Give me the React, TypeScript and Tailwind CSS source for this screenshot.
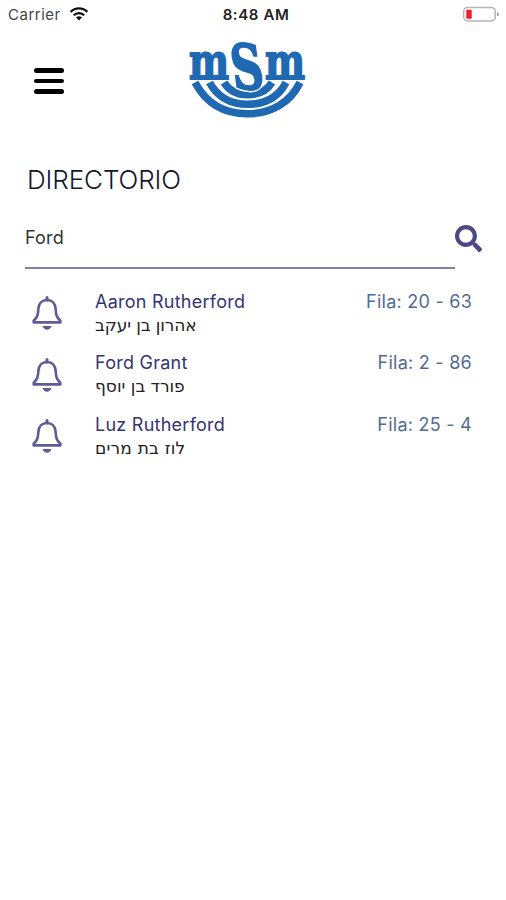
import { FaSearch } from "react-icons/fa";

const people = [
  { name: "Aaron Rutherford", hebrew: "אהרון בן יעקב", seat: "Fila: 20 - 63", hebrewSize: "text-[17px] tracking-[-0.1px]" },
  { name: "Ford Grant", hebrew: "פורד בן יוסף", seat: "Fila: 2 - 86", hebrewSize: "text-[17px]" },
  { name: "Luz Rutherford", hebrew: "לוז בת מרים", seat: "Fila: 25 - 4", hebrewSize: "text-[17px] tracking-[0.2px]" },
];

const WifiIcon: React.FC = () => (
  <svg width="20" height="14" viewBox="0 0 20 14" fill="none" stroke="#111" strokeWidth="2.3">
    <path d="M1.6 4.9C6.2 .3 13.8 .3 18.4 4.9" />
    <path d="M4.8 8.3C7.7 5.4 12.3 5.4 15.2 8.3" />
    <path d="M10 13.4L7 10.4Q10 8.2 13 10.4Z" fill="#111" stroke="none" />
  </svg>
);

const BatteryIcon: React.FC = () => (
  <svg width="38" height="17" viewBox="0 0 38 17" fill="none">
    <rect x="1.7" y="1.4" width="31.6" height="13.6" rx="4" stroke="#b5b5b5" strokeWidth="1.5" />
    <rect x="4.3" y="3.8" width="5.4" height="9" rx="0.8" fill="#f51b20" />
    <path d="M35 6.2Q37 6.7 37 8.2T35 10.2Z" fill="#999" />
  </svg>
);

const BellIcon: React.FC = () => (
  <svg width="30" height="34" viewBox="0 0 30 34" fill="none" stroke="#5d5c98">
    <path d="M15 1.5V4" strokeWidth="3" strokeLinecap="round" />
    <path
      d="M15 4C9.8 4 6.8 7.6 6.4 12.6C6 18.5 5.7 21 1.7 24.8V26.4H28.3V24.8C24.3 21 24 18.5 23.6 12.6C23.2 7.6 20.2 4 15 4Z"
      strokeWidth="2.6"
      strokeLinejoin="round"
    />
    <path d="M10.5 30H19.5Q18 33.8 15 33.8T10.5 30Z" fill="#5d5c98" stroke="none" />
  </svg>
);

const Logo: React.FC = () => (
  <svg width="122" height="80" viewBox="0 0 122 80" className="overflow-visible">
    {/* Menorah arms */}
    <g fill="none" stroke="#1f69b3" strokeWidth="7.6">
      <path d="M9 42.5C20 63 38 73.8 61.5 73.8S104 63 114 42.5" />
      <path d="M23.5 42.5C31 56 43 64.3 61.5 64.3S93 56 100 42.5" />
      <path d="M38 42.5C43 50.5 50 54.8 61.5 54.8S81 50.5 86 42.5" />
    </g>
    <g fill="#1f69b3" stroke="#1f69b3" fontFamily="DejaVu Serif, serif" fontWeight="700">
      <text x="3" y="39" fontSize="51" strokeWidth="2" textLength="40" lengthAdjust="spacingAndGlyphs">m</text>
      <text x="79" y="39" fontSize="51" strokeWidth="2" textLength="40" lengthAdjust="spacingAndGlyphs">m</text>
      <g transform="skewX(8)">
        <text x="41" y="49" fontSize="62" textLength="32" lengthAdjust="spacingAndGlyphs" stroke="#fff" strokeWidth="5">S</text>
        <text x="41" y="49" fontSize="62" textLength="32" lengthAdjust="spacingAndGlyphs" strokeWidth="2">S</text>
      </g>
    </g>
  </svg>
);

const App: React.FC = () => {
  return (
    <div className="h-[900px] w-[506px] bg-white font-['Inter',sans-serif]">
      {/* Status bar */}
      <div className="grid h-7 grid-cols-3 items-center pl-2 pr-1.5 text-[15px]">
        <div className="flex items-center gap-2 text-[#444]">
          <span className="pt-0.5 tracking-[0.5px]">Carrier</span>
          <WifiIcon />
        </div>
        <span className="pl-1 pt-0.5 text-center text-[15px] font-semibold tracking-[0.6px] text-[#222]">8:48 AM</span>
        <div className="flex justify-end">
          <BatteryIcon />
        </div>
      </div>

      {/* Header */}
      <header className="flex h-28 items-start pl-[34px] pt-3">
        <button className="mt-7 flex w-[30px] flex-col gap-1.5" aria-label="Menu">
          <span className="h-[4.6px] w-full rounded-sm bg-black" />
          <span className="h-[4.6px] w-full rounded-sm bg-black" />
          <span className="h-[4.6px] w-full rounded-sm bg-black" />
        </button>
        <div className="ml-[122px]">
          <Logo />
        </div>
      </header>

      <main>
        <h1 className="mt-5 pl-[27px] text-[26px] font-light leading-10 tracking-[-0.1px] text-[#14172b]">DIRECTORIO</h1>

        {/* Search field */}
        <div className="ml-[25px] mt-4 flex h-[53px]">
          <div className="w-[430px] border-b-2 border-[#827fa8] pt-2.5">
            <p className="text-[18px] leading-6 tracking-[0.2px] text-[#333]">Ford</p>
          </div>
          <FaSearch className="mt-[9px] size-[27px] text-[#4d4985]" />
        </div>

        {/* Results */}
        <ul className="pt-[20.5px]">
          {people.map((person) => (
            <li key={person.name} className="flex h-[61.5px] pl-8 pr-[34px]">
              <div className="pt-[6.5px]">
                <BellIcon />
              </div>
              <div className="ml-[33px] flex-1">
                <p className="text-[18px] leading-6 tracking-[0.25px] text-[#343470]">{person.name}</p>
                <p className={`font-['DejaVu_Sans',sans-serif] leading-[23px] text-[#222] ${person.hebrewSize}`}>{person.hebrew}</p>
              </div>
              <p className="text-[18px] leading-6 tracking-[0.25px] text-[#536b94]">{person.seat}</p>
            </li>
          ))}
        </ul>
      </main>
    </div>
  );
};

export default App;
